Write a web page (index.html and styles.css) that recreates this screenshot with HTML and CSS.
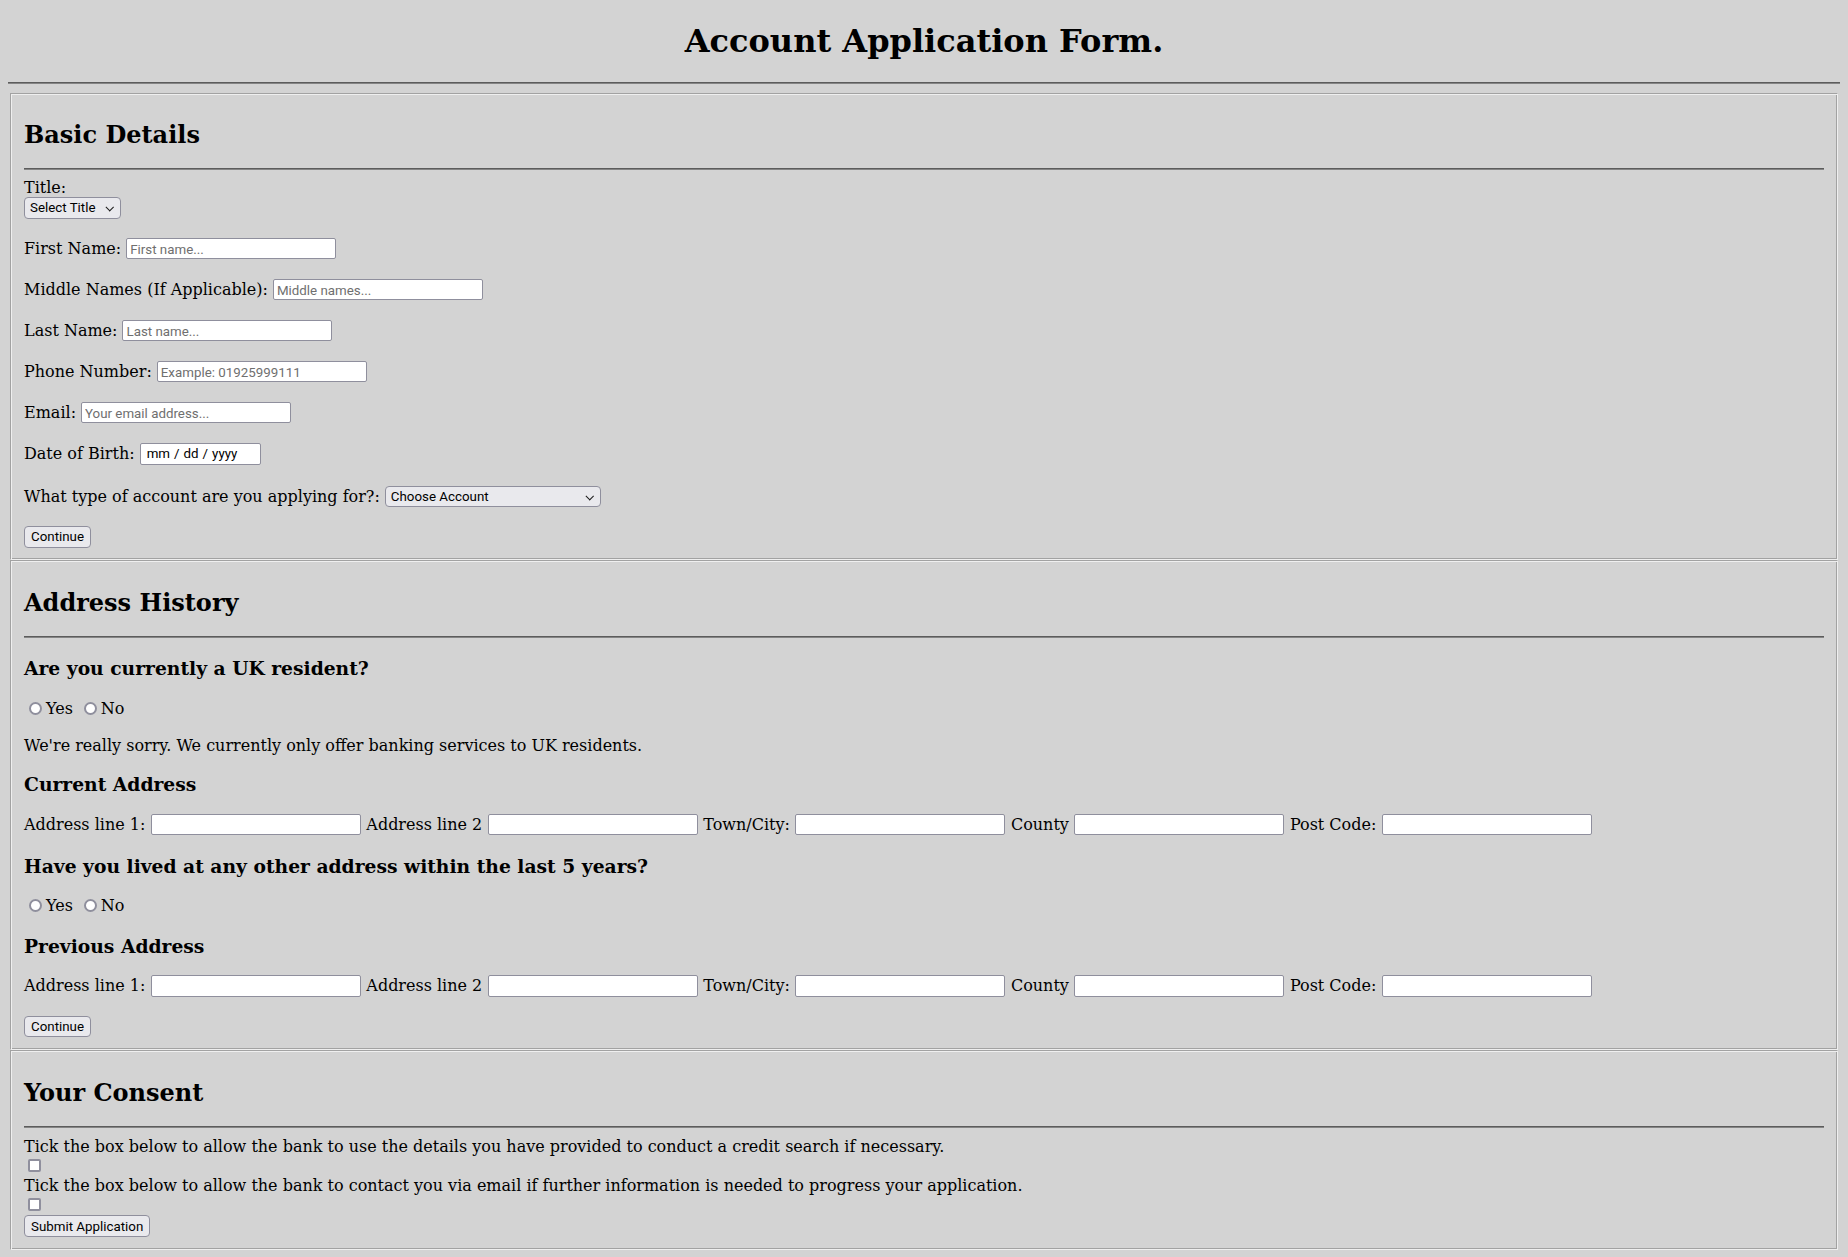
FILE: index.html
```html
<!DOCTYPE html>
<html lang="en">
<head>
<meta charset="utf-8">
<title>Account Application Form</title>
<link rel="stylesheet" href="styles.css">
</head>
<body>
<h1 class="page-title">Account Application Form.</h1>
<hr class="rule page-rule">
<form class="app-form">
  <fieldset class="panel">
    <h2 class="panel-title">Basic Details</h2>
    <hr class="rule">
    <div class="stack">
      <label class="block-label" for="title">Title:</label>
      <span class="select-wrap"><select id="title" class="select select-title"><option>Select Title</option></select></span>
    </div>
    <div class="row row-first"><label for="fn">First Name:</label><input id="fn" class="text" type="text" placeholder="First name..."></div>
    <div class="row"><label for="mn">Middle Names (If Applicable):</label><input id="mn" class="text" type="text" placeholder="Middle names..."></div>
    <div class="row"><label for="ln">Last Name:</label><input id="ln" class="text" type="text" placeholder="Last name..."></div>
    <div class="row"><label for="ph">Phone Number:</label><input id="ph" class="text" type="text" placeholder="Example: 01925999111"></div>
    <div class="row"><label for="em">Email:</label><input id="em" class="text" type="text" placeholder="Your email address..."></div>
    <div class="row"><label for="dob">Date of Birth:</label><input id="dob" class="date" type="date"></div>
    <div class="row row-account"><label for="acc">What type of account are you applying for?:</label><span class="select-wrap"><select id="acc" class="select select-account"><option>Choose Account</option></select></span></div>
    <div class="row row-button"><button class="btn" type="button">Continue</button></div>
  </fieldset>

  <fieldset class="panel">
    <h2 class="panel-title">Address History</h2>
    <hr class="rule">
    <h3 class="question">Are you currently a UK resident?</h3>
    <div class="choice choice-first">
      <input class="radio" type="radio" name="uk" id="uk-yes"><label class="choice-label" for="uk-yes">Yes</label>
      <input class="radio" type="radio" name="uk" id="uk-no"><label class="choice-label" for="uk-no">No</label>
    </div>
    <p class="note">We're really sorry. We currently only offer banking services to UK residents.</p>
    <h3 class="question after-note">Current Address</h3>
    <div class="row row-address">
      <label for="c1">Address line 1:</label><input id="c1" class="text" type="text">
      <label for="c2">Address line 2</label><input id="c2" class="text" type="text">
      <label for="c3">Town/City:</label><input id="c3" class="text" type="text">
      <label for="c4">County</label><input id="c4" class="text" type="text">
      <label for="c5">Post Code:</label><input id="c5" class="text" type="text">
    </div>
    <h3 class="question">Have you lived at any other address within the last 5 years?</h3>
    <div class="choice">
      <input class="radio" type="radio" name="prev" id="prev-yes"><label class="choice-label" for="prev-yes">Yes</label>
      <input class="radio" type="radio" name="prev" id="prev-no"><label class="choice-label" for="prev-no">No</label>
    </div>
    <h3 class="question">Previous Address</h3>
    <div class="row row-address row-prev">
      <label for="p1">Address line 1:</label><input id="p1" class="text" type="text">
      <label for="p2">Address line 2</label><input id="p2" class="text" type="text">
      <label for="p3">Town/City:</label><input id="p3" class="text" type="text">
      <label for="p4">County</label><input id="p4" class="text" type="text">
      <label for="p5">Post Code:</label><input id="p5" class="text" type="text">
    </div>
    <div class="row"><button class="btn" type="button">Continue</button></div>
  </fieldset>

  <fieldset class="panel">
    <h2 class="panel-title">Your Consent</h2>
    <hr class="rule">
    <label class="tick-text tick-first" for="cs1">Tick the box below to allow the bank to use the details you have provided to conduct a credit search if necessary.</label>
    <div class="check-row"><input class="check" type="checkbox" id="cs1"></div>
    <label class="tick-text" for="cs2">Tick the box below to allow the bank to contact you via email if further information is needed to progress your application.</label>
    <div class="check-row"><input class="check" type="checkbox" id="cs2"></div>
    <div class="submit-row"><button class="btn" type="submit">Submit Application</button></div>
  </fieldset>
</form>
</body>
</html>
```

FILE: styles.css
```css
html {
  background: #d3d3d3;
}

body {
  margin: 0 8px;
  background: #d3d3d3;
  color: #000;
  font-family: "DejaVu Serif", serif;
  font-size: 16px;
  line-height: normal;
}

.page-title {
  margin: 22px 0 22px;
  font-size: 32px;
  font-weight: bold;
  text-align: center;
}

.rule {
  height: 0;
  margin: 19.1px 0 8px;
  border: 0;
  border-top: 1px solid #5c5c5c;
  border-bottom: 1px solid #858585;
}

.page-rule {
  margin: 0 0 8.5px;
}

.app-form {
  margin: 0;
}

.panel {
  margin: 0 2px;
  min-width: 0;
  padding: 6.6px 13px 11.8px;
  border: 1px solid;
  border-color: #a2a2a2 #efefef #efefef #a2a2a2;
  box-shadow: inset 1px 1px 0 #efefef, inset -1px -1px 0 #a2a2a2;
}

.panel-title {
  margin: 19.92px 0 0;
  font-size: 24px;
  font-weight: bold;
}

.question {
  margin: 19.5px 0 0;
  font-size: 18.72px;
  font-weight: bold;
}

.question.after-note {
  margin-top: 17.5px;
}

.note {
  margin: 18px 0 0;
}

/* basic details */
.stack {
  display: flex;
  flex-direction: column;
  align-items: flex-start;
  margin-top: 8px;
}

.block-label {
  display: block;
}

.stack .select-wrap {
  margin-top: 0.2px;
}

.row {
  display: flex;
  align-items: center;
  column-gap: 5px;
  margin: 19.67px 0 0;
}

.row-first {
  margin-top: 19.4px;
}

.row-account {
  margin-top: 21px;
}

.row-button {
  margin-top: 19px;
}

.row-address {
  column-gap: 5.5px;
  margin-top: 19.2px;
}

.row-prev {
  margin-top: 18.5px;
}

/* controls */
.text,
.date,
.select,
.btn {
  box-sizing: border-box;
  height: 21.33px;
  margin: 0;
  font-family: Roboto, "Liberation Sans", sans-serif;
  font-size: 13.33px;
  color: #000;
}

.text {
  width: 210px;
  padding: 1px 3px 0;
  background: #fff;
  border: 1px solid #8f8f9d;
  border-radius: 2px;
}

.text::placeholder {
  color: #6f6f6f;
  opacity: 1;
}

.date {
  width: 121.4px;
  height: 22px;
  padding: 0 4px 0 5px;
  background: #fff;
  border: 1px solid #8f8f9d;
  border-radius: 2px;
}

.date::-webkit-calendar-picker-indicator {
  display: none;
}

.date::-webkit-datetime-edit-text {
  padding: 0 3px;
}

.date::-webkit-datetime-edit {
  color: #000;
}

.select-wrap {
  position: relative;
  display: inline-block;
}

.select-wrap::after {
  content: "";
  position: absolute;
  right: 8.5px;
  top: 50%;
  width: 4.5px;
  height: 4.5px;
  border-right: 1.4px solid #1a1a1a;
  border-bottom: 1.4px solid #1a1a1a;
  transform: translateY(-72%) rotate(45deg);
  pointer-events: none;
}

.select {
  display: block;
  appearance: none;
  -webkit-appearance: none;
  padding: 0 20px 0 5px;
  background: #e9e9ed;
  border: 1px solid #8f8f9d;
  border-radius: 4px;
}

.select-title {
  width: 97.4px;
}

.select-account {
  width: 215.7px;
}

.btn {
  padding: 0 6px;
  background: #e9e9ed;
  border: 1px solid #8f8f9d;
  border-radius: 4px;
  cursor: pointer;
}

/* radios */
.choice {
  display: flex;
  align-items: center;
  height: 19px;
  margin: 19.2px 0 0;
}

.choice-first {
  margin-top: 20px;
}

.radio {
  appearance: none;
  -webkit-appearance: none;
  box-sizing: border-box;
  width: 13px;
  height: 13px;
  margin: 0 4px 0 5px;
  background: #fff;
  border: 2px solid #8f8f9d;
  border-radius: 50%;
}

.choice-label {
  margin-right: 6px;
}

/* consent */
.tick-text {
  display: block;
  margin: 0;
}

.tick-first {
  margin-top: 9.5px;
}

.check-row {
  display: flex;
  align-items: flex-start;
  height: 20px;
}

.check {
  appearance: none;
  -webkit-appearance: none;
  box-sizing: border-box;
  width: 13px;
  height: 13px;
  margin: 3px 3px 0 4px;
  background: #fff;
  border: 2px solid #8f8f9d;
  border-radius: 2px;
}

.submit-row {
  display: flex;
}
```
